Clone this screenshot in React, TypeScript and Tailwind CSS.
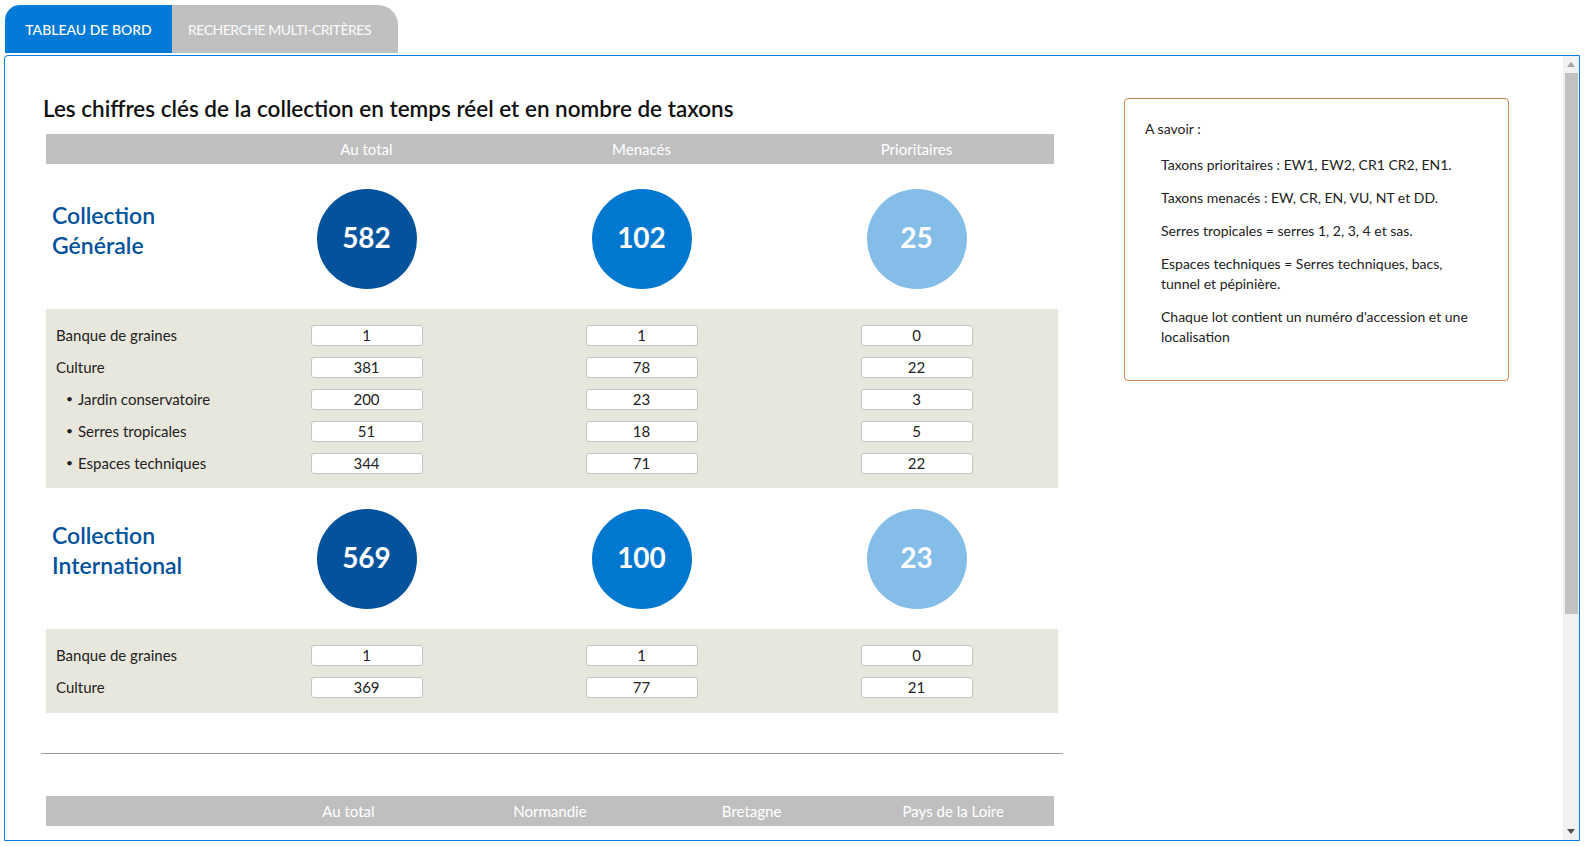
import React from 'react';

type Row = { label: string; bullet?: boolean; values: number[] };

const general: Row[] = [
  { label: 'Banque de graines', values: [1, 1, 0] },
  { label: 'Culture', values: [381, 78, 22] },
  { label: 'Jardin conservatoire', bullet: true, values: [200, 23, 3] },
  { label: 'Serres tropicales', bullet: true, values: [51, 18, 5] },
  { label: 'Espaces techniques', bullet: true, values: [344, 71, 22] },
];

const international: Row[] = [
  { label: 'Banque de graines', values: [1, 1, 0] },
  { label: 'Culture', values: [369, 77, 21] },
];

const circleColors = ['bg-[#03529b]', 'bg-[#0078d0]', 'bg-[#84bde8]'];

function Circles({ title, sub, values }: { title: string; sub: string; values: number[] }) {
  return (
    <div className="grid grid-cols-[183px_275px_275px_275px] items-center pb-[20px]">
      <div className="pl-[6px] mb-[18px] text-[23px] leading-[30px] font-semibold text-[#03529b]">
        {title}
        <br />
        {sub}
      </div>
      {values.map((v, i) => (
        <div key={i} className="flex justify-center">
          <div
            className={`w-[100px] h-[100px] rounded-full flex items-center justify-center pb-[4px] text-white text-[28px] font-bold ${circleColors[i]}`}
          >
            {v}
          </div>
        </div>
      ))}
    </div>
  );
}

function Details({ rows, pb }: { rows: Row[]; pb: string }) {
  return (
    <div className={`bg-[#e8e7dd] w-[1012px] pt-[15px] ${pb} flex flex-col gap-[11px]`}>
      {rows.map((r) => (
        <div key={r.label} className="grid grid-cols-[183px_275px_275px_275px] items-center h-[21px]">
          <div className={`text-[15px] text-[#222] ${r.bullet ? 'pl-[20px]' : 'pl-[10px]'} flex items-center`}>
            {r.bullet && <span className="w-[12px] text-[12px]">•</span>}
            {r.label}
          </div>
          {r.values.map((v, i) => (
            <div key={i} className="flex justify-center">
              <div className="w-[112px] h-[21px] bg-white border border-[#c4c4c4] rounded-[3px] text-center text-[15px] leading-[19px] text-[#222]">
                {v}
              </div>
            </div>
          ))}
        </div>
      ))}
    </div>
  );
}

export default function App() {
  return (
    <div className="min-h-screen bg-white font-[Lato,'Noto_Sans',sans-serif] text-[#222]">
      <div className="flex ml-[5px] pt-[5px] h-[53px]">
        <div className="w-[167px] bg-[#0179d6] rounded-tl-[15px] flex items-center justify-center text-white text-[14px] font-medium">
          TABLEAU DE BORD
        </div>
        <div className="w-[226px] bg-[#c0c0c0] rounded-tr-[20px] flex items-center pl-[16px] text-[#f7f7f7] text-[14px] font-medium tracking-[-0.5px]">
          RECHERCHE MULTI-CRITÈRES
        </div>
      </div>

      <div className="mt-[2px] ml-[4px] w-[1576px] h-[786px] border border-[#0b7dd8] rounded-tl-[4px] flex overflow-hidden">
        <div className="flex-1 flex pl-[36px] pt-[39px] overflow-hidden">
          <div className="w-[1022px] shrink-0">
            <h1 className="pl-[2px] text-[22.5px] leading-[28px] font-semibold text-[#111]">
              Les chiffres clés de la collection en temps réel et en nombre de taxons
            </h1>

            <div className="ml-[5px] mt-[11px]">
              <div className="w-[1008px] h-[30px] bg-[#bfbfbf] grid grid-cols-[183px_275px_275px_275px] items-center text-white text-[15px]">
                <div />
                <div className="text-center">Au total</div>
                <div className="text-center">Menacés</div>
                <div className="text-center">Prioritaires</div>
              </div>

              <div className="pt-[25px]">
                <Circles title="Collection" sub="Générale" values={[582, 102, 25]} />
              </div>
              <Details rows={general} pb="pb-[15px]" />

              <div className="pt-[21px]">
                <Circles title="Collection" sub="International" values={[569, 100, 23]} />
              </div>
              <Details rows={international} pb="pb-[16px]" />
            </div>

            <div className="mt-[40px] h-px bg-[#9e9e9e] w-[1022px]" />

            <div className="ml-[5px] mt-[42px] w-[1008px] h-[30px] bg-[#bfbfbf] grid grid-cols-5 items-center text-white text-[15px]">
              <div />
              <div className="text-center">Au total</div>
              <div className="text-center">Normandie</div>
              <div className="text-center">Bretagne</div>
              <div className="text-center">Pays de la Loire</div>
            </div>
          </div>

          <div className="ml-[61px] mt-[3px] w-[385px] h-[283px] shrink-0 border border-[#c8884f] rounded-[4px] pt-[20px] pl-[20px] pr-[16px] text-[14px] leading-[20px] text-[#222]">
            <p className="mb-[16px]">A savoir :</p>
            <div className="pl-[16px] flex flex-col gap-[13px] whitespace-nowrap">
              <p>Taxons prioritaires : EW1, EW2, CR1 CR2, EN1.</p>
              <p>Taxons menacés : EW, CR, EN, VU, NT et DD.</p>
              <p>Serres tropicales = serres 1, 2, 3, 4 et sas.</p>
              <p>
                Espaces techniques = Serres techniques, bacs,
                <br />
                tunnel et pépinière.
              </p>
              <p>
                Chaque lot contient un numéro d'accession et une
                <br />
                localisation
              </p>
            </div>
          </div>
        </div>

        <div className="w-[16px] shrink-0 bg-[#f1f1f1] flex flex-col items-center">
          <div className="h-[17px] flex items-center justify-center">
            <svg width="8" height="5" viewBox="0 0 8 5">
              <path d="M0 5 L4 0 L8 5 Z" fill="#a3a3a3" />
            </svg>
          </div>
          <div className="w-[13px] h-[541px] bg-[#c1c1c1]" />
          <div className="flex-1" />
          <div className="h-[17px] flex items-center justify-center">
            <svg width="8" height="5" viewBox="0 0 8 5">
              <path d="M0 0 L8 0 L4 5 Z" fill="#505050" />
            </svg>
          </div>
        </div>
      </div>
    </div>
  );
}
